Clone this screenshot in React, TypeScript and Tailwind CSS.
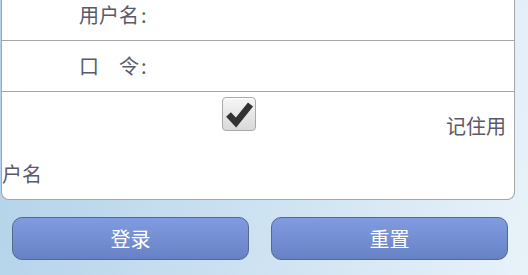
const font = { fontFamily: '"Noto Sans CJK SC", "Noto Sans", sans-serif' };

const CheckBox = () => (
  <div className="w-[34px] h-[34px] rounded-[4px] border border-[#a9a9a9] bg-[linear-gradient(to_bottom,#f6f6f6,#d9d9d9)] shadow-[inset_0_1px_0_#ffffff]">
    <svg width="32" height="32" viewBox="0 0 32 32">
      <path d="M5.5 16.5 L13 24.5 L27.5 6.5" fill="none" stroke="#333333" strokeWidth="6.5" strokeLinejoin="miter" />
    </svg>
  </div>
);

const App = () => {
  return (
    <div
      className="w-[528px] h-[275px] overflow-hidden bg-[linear-gradient(100deg,#b2d2e9_0%,#cfe3f2_55%,#e8f2f9_100%)]"
      style={font}
    >
      <div className="-mt-[10px] ml-[1px] w-[514px] bg-white border border-t-0 border-[#a6a6a6] rounded-b-[8px] text-[20px] text-[#5a5a6a]">
        <div className="h-[51px] border-b border-[#a6a6a6] flex items-center pl-[77px] leading-[20px]">
          用户名<span className="ml-[2px]">:</span>
        </div>
        <div className="h-[51px] border-b border-[#a6a6a6] flex items-center pl-[77px] leading-[20px]">
          口　令<span className="ml-[2px]">:</span>
        </div>
        <div className="pt-[5px] pb-[15px]">
          <div className="flex items-start">
            <div className="ml-[220px]">
              <CheckBox />
            </div>
            <div className="flex-1 text-right pr-[8px] mt-[19px] leading-[20px]">记住用</div>
          </div>
          <div className="mt-[28px] leading-[20px]">户名</div>
        </div>
      </div>

      <div className="flex gap-[22px] mt-[17px] ml-[12px]">
        {["登录", "重置"].map((label) => (
          <button
            key={label}
            className="w-[237px] h-[43px] rounded-[10px] border border-[#56688c] bg-[linear-gradient(to_bottom,#809be0,#6782c4)] text-white text-[20px] leading-none flex items-center justify-center"
            style={font}
          >
            {label}
          </button>
        ))}
      </div>
    </div>
  );
};

export default App;
